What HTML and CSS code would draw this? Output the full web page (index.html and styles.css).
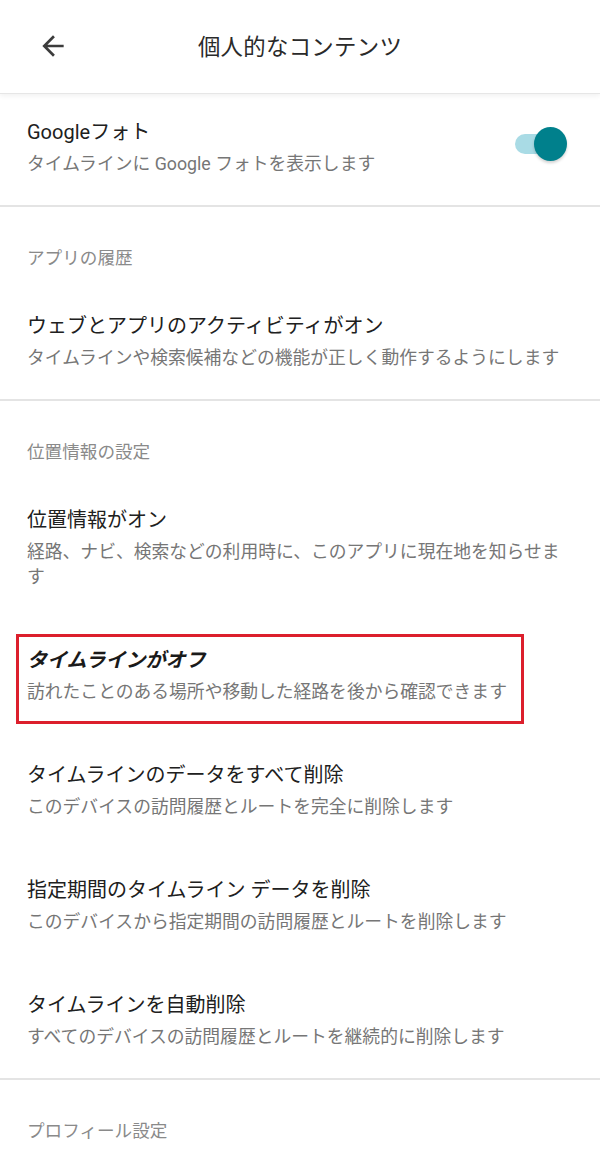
FILE: index.html
```html
<!DOCTYPE html>
<html lang="ja">
<head>
<meta charset="utf-8">
<title>個人的なコンテンツ</title>
<link rel="stylesheet" href="styles.css">
</head>
<body>
<header class="appbar">
  <span class="back">
    <svg viewBox="0 0 24 24" width="32" height="32"><path d="M20 11H7.83l5.59-5.59L12 4l-8 8 8 8 1.41-1.41L7.83 13H20v-2z" fill="#3c3c3c"/></svg>
  </span>
  <h1 class="title">個人的なコンテンツ</h1>
</header>
<main>
  <div class="row first">
    <div class="text">
      <div class="item-title">Googleフォト</div>
      <div class="item-sub">タイムラインに Google フォトを表示します</div>
    </div>
    <div class="toggle"><span class="track"></span><span class="thumb"></span></div>
  </div>
  <div class="divider"></div>
  <div class="section">アプリの履歴</div>
  <div class="row">
    <div class="text">
      <div class="item-title">ウェブとアプリのアクティビティがオン</div>
      <div class="item-sub">タイムラインや検索候補などの機能が正しく動作するようにします</div>
    </div>
  </div>
  <div class="divider"></div>
  <div class="section">位置情報の設定</div>
  <div class="row">
    <div class="text">
      <div class="item-title">位置情報がオン</div>
      <div class="item-sub">経路、ナビ、検索などの利用時に、このアプリに現在地を知らせます</div>
    </div>
  </div>
  <div class="row highlighted">
    <div class="text">
      <div class="item-title strong">タイムラインがオフ</div>
      <div class="item-sub">訪れたことのある場所や移動した経路を後から確認できます</div>
    </div>
    <span class="mark"></span>
  </div>
  <div class="row">
    <div class="text">
      <div class="item-title">タイムラインのデータをすべて削除</div>
      <div class="item-sub">このデバイスの訪問履歴とルートを完全に削除します</div>
    </div>
  </div>
  <div class="row">
    <div class="text">
      <div class="item-title">指定期間のタイムライン データを削除</div>
      <div class="item-sub">このデバイスから指定期間の訪問履歴とルートを削除します</div>
    </div>
  </div>
  <div class="row">
    <div class="text">
      <div class="item-title">タイムラインを自動削除</div>
      <div class="item-sub">すべてのデバイスの訪問履歴とルートを継続的に削除します</div>
    </div>
  </div>
  <div class="divider"></div>
  <div class="section">プロフィール設定</div>
</main>
</body>
</html>
```
FILE: styles.css
```css
* { box-sizing: border-box; }
html, body {
  margin: 0;
  padding: 0;
  background: #ffffff;
}
body {
  width: 600px;
  height: 1176px;
  overflow: hidden;
  font-family: "Roboto", "Noto Sans CJK JP", sans-serif;
  color: #222222;
}
.appbar {
  position: relative;
  z-index: 2;
  height: 93px;
  display: flex;
  align-items: center;
  justify-content: center;
  background: #ffffff;
  box-shadow: 0 1px 0 #e6e6e6, 0 3px 5px rgba(0,0,0,0.06);
}
.back {
  position: absolute;
  left: 37px;
  top: 30px;
  width: 32px;
  height: 32px;
  display: flex;
}
.title {
  margin: 0;
  font-size: 22.4px;
  font-weight: 400;
  color: #2a2a2a;
  line-height: 30px;
  letter-spacing: 0.3px;
}
.row {
  position: relative;
  display: flex;
  align-items: center;
  padding: 26px 33px 29px 27px;
}
.row.first {
  padding-top: 23px;
}
.text {
  flex: 1;
  min-width: 0;
}
.item-title {
  font-size: 20px;
  line-height: 32px;
  color: #202020;
}
.item-title.strong {
  font-weight: 700;
  font-style: italic;
  color: #1a1a1a;
}
.item-sub {
  margin-top: 3px;
  font-size: 17.8px;
  line-height: 25px;
  color: #767676;
}
.toggle {
  position: relative;
  width: 52px;
  height: 34px;
  flex: none;
  margin-top: -4px;
}
.track {
  position: absolute;
  left: 0;
  top: 7px;
  width: 38px;
  height: 20px;
  border-radius: 10px;
  background: #a9dbe5;
}
.thumb {
  position: absolute;
  right: 0;
  top: 0;
  width: 33px;
  height: 34px;
  border-radius: 50%;
  background: #00808c;
  box-shadow: 0 2px 3px rgba(0,0,0,0.18);
}
.divider {
  height: 2px;
  background: #e4e4e4;
}
.section {
  padding: 39px 27px 14px;
  font-size: 17.6px;
  line-height: 24px;
  color: #8a8a8a;
}
.mark {
  position: absolute;
  left: 16px;
  top: 16px;
  width: 508px;
  height: 90px;
  border: 3px solid #dc1f2c;
  pointer-events: none;
}
```
